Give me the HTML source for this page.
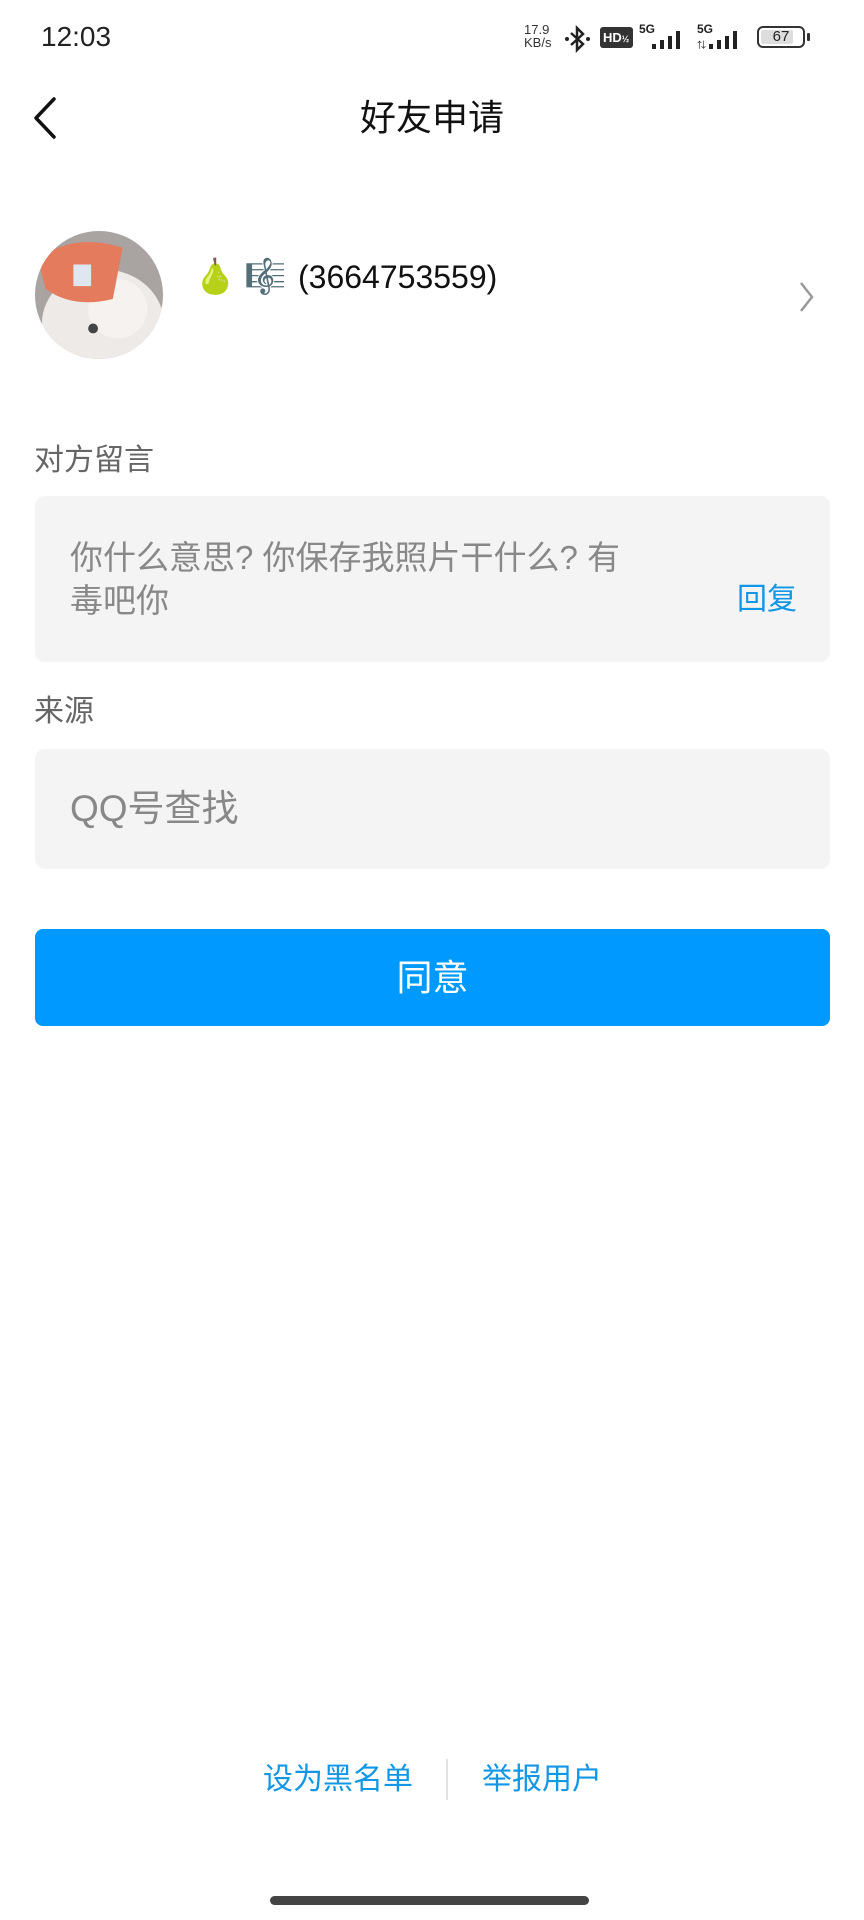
<!DOCTYPE html>
<html><head><meta charset="utf-8"><style>
*{margin:0;padding:0;box-sizing:border-box}
body{width:864px;height:1920px;background:#fff;position:relative;overflow:hidden;font-family:"Liberation Sans","Noto Sans CJK SC",sans-serif}
.a{position:absolute;white-space:nowrap}
.box{position:absolute;left:35px;width:795px;background:#f4f4f4;border-radius:10px}
</style></head><body>
<div class="a" style="left:41px;top:19px;font-size:28px;color:#222;line-height:36px">12:03</div>
<div class="a" style="left:524px;top:23px;font-size:13px;line-height:13px;color:#333">17.9<br>KB/s</div>
<svg class="a" style="left:563px;top:24px" width="30" height="30" viewBox="0 0 30 30"><path d="M8 9l12 11-6 6V4l6 6-12 11" fill="none" stroke="#222" stroke-width="2.5"/><circle cx="4" cy="15" r="2" fill="#222"/><circle cx="25" cy="15" r="2" fill="#222"/></svg>
<div class="a" style="left:600px;top:27px;width:33px;height:21px;background:#333;border-radius:3px;color:#fff;font-size:13px;font-weight:bold;line-height:21px;padding-left:3px">HD<span style="font-size:9px">½</span></div>
<div class="a" style="left:639px;top:22px;font-size:12px;font-weight:bold;color:#222">5G</div>
<svg class="a" style="left:652px;top:28px" width="36" height="22"><rect x="0" y="16" width="4" height="5" fill="#222"/><rect x="8" y="12" width="4" height="9" fill="#222"/><rect x="16" y="8" width="4" height="13" fill="#222"/><rect x="24" y="3" width="4" height="18" fill="#222"/></svg>
<div class="a" style="left:697px;top:22px;font-size:12px;font-weight:bold;color:#222">5G</div>
<svg class="a" style="left:697px;top:28px" width="50" height="22"><text x="0" y="20" font-size="9" fill="#222">⇅</text><rect x="12" y="16" width="4" height="5" fill="#222"/><rect x="20" y="12" width="4" height="9" fill="#222"/><rect x="28" y="8" width="4" height="13" fill="#222"/><rect x="36" y="3" width="4" height="18" fill="#222"/></svg>
<div class="a" style="left:757px;top:26px;width:48px;height:22px;border:2px solid #333;border-radius:6px;font-size:15px;line-height:18px;text-align:center;color:#222"><div style="position:absolute;left:2px;top:2px;width:32px;height:14px;background:#ddd;border-radius:2px;z-index:-1"></div>67</div>
<div class="a" style="left:807px;top:33px;width:3px;height:8px;background:#333;border-radius:1px"></div>

<svg class="a" style="left:30px;top:96px" width="32" height="44"><path d="M24 3L6 22l18 19" fill="none" stroke="#111" stroke-width="3.5" stroke-linecap="round" stroke-linejoin="round"/></svg>
<div class="a" style="left:0;width:864px;text-align:center;top:94px;font-size:36px;color:#111;line-height:48px">好友申请</div>

<svg class="a" style="left:34px;top:230px" width="130" height="130" viewBox="0 0 132 132"><defs><clipPath id="c"><circle cx="66" cy="66" r="65"/></clipPath></defs><g clip-path="url(#c)"><rect width="132" height="132" fill="#a9a4a2"/><ellipse cx="70" cy="95" rx="62" ry="55" fill="#eeeae8"/><ellipse cx="85" cy="80" rx="30" ry="30" fill="#f6f2f0"/><path d="M4 30 Q40 2 90 18 L80 70 Q40 80 12 60Z" fill="#e37b5c"/><rect x="40" y="35" width="18" height="22" fill="#dfe6f0"/><circle cx="60" cy="100" r="5" fill="#444"/></g></svg>

<div class="a" style="left:194px;top:255px;font-size:34px;line-height:44px">🍐</div>
<div class="a" style="left:244px;top:255px;font-size:34px;line-height:44px;color:#557">🎼</div>
<div class="a" style="left:298px;top:257px;font-size:32px;color:#111;line-height:40px">(3664753559)</div>
<svg class="a" style="left:796px;top:280px" width="22" height="34"><path d="M5 3l11 14-11 14" fill="none" stroke="#999" stroke-width="2.5"/></svg>

<div class="a" style="left:34px;top:441px;font-size:30px;color:#666;line-height:40px">对方留言</div>
<div class="box" style="top:496px;height:166px"></div>
<div class="a" style="left:70px;top:536px;font-size:33px;color:#888;line-height:43px">你什么意思? 你保存我照片干什么? 有<br>毒吧你</div>
<div class="a" style="left:737px;top:580px;font-size:30px;color:#1296e6;line-height:40px">回复</div>

<div class="a" style="left:34px;top:692px;font-size:30px;color:#666;line-height:40px">来源</div>
<div class="box" style="top:749px;height:120px"></div>
<div class="a" style="left:70px;top:787px;font-size:37px;color:#888;line-height:44px">QQ号查找</div>

<div class="a" style="left:35px;top:929px;width:795px;height:97px;background:#0099ff;border-radius:8px;color:#fff;font-size:36px;text-align:center;line-height:97px">同意</div>

<div class="a" style="left:263px;top:1760px;font-size:30px;color:#1296e6;line-height:40px">设为黑名单</div>
<div class="a" style="left:446px;top:1759px;width:2px;height:41px;background:#e2e2e2"></div>
<div class="a" style="left:482px;top:1760px;font-size:30px;color:#1296e6;line-height:40px">举报用户</div>
<div class="a" style="left:270px;top:1896px;width:319px;height:9px;background:#444;border-radius:5px"></div>
</body></html>
